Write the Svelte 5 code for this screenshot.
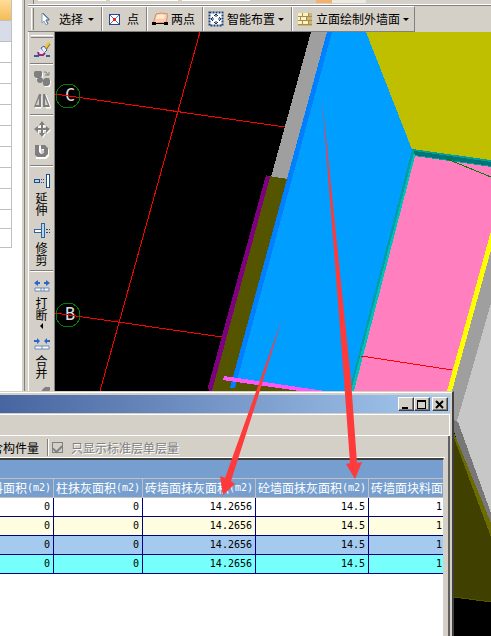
<script>
  const tools = [
    { icon: 'select', label: '选择', menu: true },
    { icon: 'point', label: '点' },
    { icon: 'line', label: '两点' },
    { icon: 'smart', label: '智能布置', menu: true },
    { icon: 'wall', label: '立面绘制外墙面', menu: true }
  ];

  const propertyRows = Array.from({ length: 8 });

  const columns = [
    { name: '料面积', unit: '(m2)', key: 'block' },
    { name: '柱抹灰面积', unit: '(m2)', key: 'column' },
    { name: '砖墙面抹灰面积', unit: '(m2)', key: 'brick' },
    { name: '砼墙面抹灰面积', unit: '(m2)', key: 'concrete' },
    { name: '砖墙面块料面', unit: '', key: 'tile' }
  ];

  const quantities = { block: '0', column: '0', brick: '14.2656', concrete: '14.5', tile: '1' };
  const rows = [
    { tone: 'plain', ...quantities },
    { tone: 'cream', ...quantities },
    { tone: 'blue', ...quantities },
    { tone: 'cyan', ...quantities }
  ];

  let singleLayer = true;
</script>

<div class="app">
  <aside class="properties">
    <div class="prop-head"></div>
    <div class="prop-title"></div>
    {#each propertyRows as _}
      <div class="prop-row"></div>
    {/each}
    <div class="prop-row short"></div>
    <div class="prop-row short"></div>
  </aside>

  <main class="main">
    <div class="top-strip">
      <span class="strip-grip"></span>
      <span class="strip-box"></span>
      <span class="strip-box"></span>
      <span class="strip-box"></span>
      <span class="strip-active"></span>
    </div>

    <div class="toolbar">
      <span class="grip"></span>
      {#each tools as tool}
        <button class="tool {tool.icon}">
          <svg width="16" height="16" viewBox="0 0 16 16" aria-hidden="true">
            {#if tool.icon === 'select'}
              <path d="M4 2v10l2-2 2 4 2-1-2-4h3z" fill="#fff" stroke="#7f9cc0" />
              <path d="M5 2l6 6v1H8l2 4" fill="none" stroke="#5f7488" />
            {:else if tool.icon === 'point'}
              <rect x="2.500" y="3.500" width="10" height="10" fill="#fff" stroke="#26478c" />
              <path d="M3 4l9 9M12 4l-9 9" stroke="#5574c0" />
              <rect x="6" y="7" width="3" height="3" fill="#f02020" />
            {:else if tool.icon === 'line'}
              <path d="M4 3q5-2 12 0l-2 9q-6-1-13 1z" fill="#fbcba9" stroke="#d58c69" />
              <path d="M5 4q4-1 8 0l-1 4q-4-1-8 0z" fill="#ffe8d6" />
              <path d="M1 12.500h14" stroke="#000" />
              <path d="M0 11h4v3H0zM12 11h4v3h-4z" />
            {:else if tool.icon === 'smart'}
              <rect x="1.500" y="1.500" width="13" height="13" fill="#fff" stroke="#1c4279" stroke-dasharray="2 1" stroke-width="2" />
              <path d="M8 3v3M8 10v3M3 8h3M10 8h3M6 5l2-2 2 2M6 11l2 2 2-2M5 6L3 8l2 2M11 6l2 2-2 2" fill="none" stroke="#15335d" />
            {:else}
              <rect x="1" y="2" width="14" height="13" fill="#a08f5c" />
              <path d="M1 2h4v3H1zM6 2h5v3H6zM1 6h2v3H1zM4 6h5v3H4zM1 10h4v3H1zM6 10h5v3H6z" fill="#fff1b8" />
              <path d="M12 2h3v3h-3zM10 6h5v3h-5zM12 10h3v3h-3zM1 14h14v1H1z" fill="#cdb670" />
            {/if}
          </svg>
          <span>{tool.label}</span>
          {#if tool.menu}<i class="caret"></i>{/if}
        </button>
      {/each}
    </div>

    <div class="workspace">
      <nav class="side-tools">
        <span class="side-grip"></span>
        <button class="side-tool brush" aria-label="格式刷">
          <svg width="18" height="16" viewBox="0 0 18 16">
            <path d="M1 14h5M13 14h4" stroke="#2e6096" stroke-width="2" />
            <path d="M11 5l4-5h2v2l-4 6z" fill="#f0c632" />
            <path d="M13 8l4-6" stroke="#806a28" />
            <path d="M8 6l3-2 3 4-3 3z" fill="#e8f0f8" stroke="#3f5f94" />
            <path d="M5 9l3-2 4 4-2 3H6z" fill="#f4dcf0" />
            <path d="M5 10l1 3h4l2-2" fill="none" stroke="#8b2b86" stroke-width="2" />
          </svg>
        </button>
        <hr />
        <button class="side-tool" aria-label="旋转">
          <svg width="18" height="17" viewBox="0 0 18 17">
            <path d="M3 3h7v6H3zM11 9h6l1 3-1 5h-5l-2-4z" fill="#fff" />
            <path d="M1 2l1-1h6l1 1v4L7 8H3L1 6zM10 10l2-2h4l1 2v4l-2 2h-4l-1-2z" fill="#7f7f7f" />
            <circle cx="7" cy="10" r="3" fill="#7f7f7f" />
            <path d="M11 2h2l2 3M12 5h4V2" fill="none" stroke="#7f7f7f" />
          </svg>
        </button>
        <button class="side-tool second" aria-label="镜像">
          <svg width="18" height="16" viewBox="0 0 18 16">
            <path d="M8 3v12H2M18 15l-5-13v13z" fill="#fff" stroke="#fff" />
            <path d="M8 1v13H1L6 1zM10 1v13h7L12 1z" fill="#7f7f7f" />
            <path d="M6 5v7H3zM12 5v7h3z" fill="#d4d0c8" />
          </svg>
        </button>
        <hr />
        <button class="side-tool" aria-label="移动">
          <svg width="18" height="17" viewBox="0 0 18 17">
            <path d="M10 2l3 4h-2v2h3V6l4 3-4 4v-3h-3v3h2l-3 4-3-4h2v-3H6v3L2 9" fill="#fff" />
            <path d="M9 0l3 4h-2v3h3V5l4 3-4 4V9h-3v3h2l-3 4-3-4h2V9H5v3L1 8l4-3v2h3V4H6z" fill="#7f7f7f" />
          </svg>
        </button>
        <button class="side-tool second" aria-label="捕捉">
          <svg width="18" height="16" viewBox="0 0 18 16">
            <path d="M3 2h5v7h4V6H9V2h4l3 4v6l-3 3H3z" fill="#fff" />
            <path d="M2 1h4v7l2 2 3-1V5H8V1h4l3 3v6l-3 3H4l-2-2z" fill="#7f7f7f" />
          </svg>
        </button>
        <hr />
        <button class="side-tool labelled">
          <svg width="18" height="16" viewBox="0 0 18 16" shape-rendering="crispEdges">
            <path d="M1 7h5v3H1z" fill="#b8d5ef" stroke="#194b8c" />
            <path d="M8 7h1M8 10h1M10 7h1M10 10h1" stroke="#194b8c" />
            <path d="M13 2h3v13h-3z" fill="#fff" stroke="#194b8c" />
          </svg>
          <span>延伸</span>
        </button>
        <button class="side-tool labelled">
          <svg width="18" height="16" viewBox="0 0 18 16" shape-rendering="crispEdges">
            <path d="M1 7h10v3H1z" fill="#fff" stroke="#2e65a0" />
            <path d="M8 1h3v14H8z" fill="#b8d5ef" stroke="#2e65a0" />
            <path d="M13 7h2M16 7h1M13 10h2M16 10h1" stroke="#194b8c" />
          </svg>
          <span>修剪</span>
        </button>
        <hr class="tight" />
        <button class="side-tool labelled">
          <svg width="18" height="14" viewBox="0 0 18 14">
            <path d="M1 4l4-3v2h2v2H5v2zM17 4l-4-3v2h-2v2h2v2z" fill="#2866d0" />
            <path d="M2 9h14v3H2zM8 9v3M11 9v3" fill="#fff" stroke="#6788b5" />
          </svg>
          <span>打断</span>
          <i class="side-caret"></i>
        </button>
        <button class="side-tool labelled">
          <svg width="18" height="14" viewBox="0 0 18 14">
            <path d="M7 4L4 1v2H1v2h3v2zM11 4l3-3v2h3v2h-3v2z" fill="#2866d0" />
            <path d="M2 9h14v3H2zM9 9v3" fill="#fff" stroke="#6788b5" />
          </svg>
          <span>合并</span>
        </button>
        <svg class="next-tool" width="18" height="14" viewBox="0 0 18 14" aria-hidden="true">
          <path d="M9 5l3-3h5v3l-3 5H8z" fill="#7f7f7f" />
        </svg>
      </nav>

      <div class="canvas">
        <svg class="model" viewBox="55 32 436 604" preserveAspectRatio="xMinYMin slice" shape-rendering="crispEdges">
          <!-- outer walls -->
          <path d="M331 32H370L417 153L351 391H234L289 178Z" fill="#009fff" />
          <path d="M366 32H491V164L413 152Z" fill="#bfbf00" />
          <path d="M311 32H328L288 179L271 177Z" fill="#9f9f9f" />
          <path d="M269 176L288 179L232 391H209Z" fill="#555500" />
          <path d="M224 378L299 391H209Z" fill="#555500" />
          <path d="M327 32H332L235 388H230Z" fill="#007fff" />
          <path d="M266 175L270 177L212 391H209L208 387Z" fill="#7f007f" />
          <path d="M224 376L325 391H299L223 380Z" fill="#ff55ff" />
          <!-- slab and inner room -->
          <path d="M415 154L491 165V236L450 391H353Z" fill="#ff7fbf" />
          <path d="M412 149L491 160V167L414 156Z" fill="#009f9f" />
          <path d="M414 151L491 162V166L414 155Z" fill="#007474" />
          <path d="M412 150L415 156L354 391H349Z" fill="#009f9f" />
          <path d="M414 152L415 156L354 391H351Z" fill="#00bfbf" />
          <path d="M491 248V513L450 420V391Z" fill="#9f9f9f" />
          <path d="M491 231V250L452 391H447Z" fill="#ffff00" />
          <path d="M491 303L469 380L457 421L491 514Z" fill="#c7c7c7" />
          <path d="M454 420L458 422L491 513V537L454 432Z" fill="#777777" />
          <path d="M454 433L491 523V602L454 597Z" fill="#6b6b00" />
          <path d="M454 438L491 537V602L454 597Z" fill="#404000" />
          <path d="M454 597L491 602" stroke="#555500" />
          <path d="M447 159L491 177" stroke="#007f00" />
          <!-- axis grid -->
          <text x="65" y="101">C</text>
          <text x="65" y="320">B</text>
          <path d="M200 32L100 391M55 94L285 127M55 313L222 337M361 356L452 370" stroke="#ff0000" />
          <circle cx="68" cy="96" r="12" fill="none" stroke="#008000" />
          <circle cx="68" cy="315" r="12" fill="none" stroke="#008000" />
        </svg>
      </div>
    </div>
  </main>

  <section class="dialog">
    <header class="titlebar">
      <button class="win-btn" aria-label="最小化"><svg width="10" height="9"><path d="M1 7h6v2H1z" /></svg></button>
      <button class="win-btn" aria-label="最大化"><svg width="10" height="9"><path d="M0 0h9v9H0zM1 2v6h7V2z" fill-rule="evenodd" /></svg></button>
      <button class="win-btn close" aria-label="关闭"><svg width="10" height="9"><path d="M1 1l7 7M8 1L1 8" stroke="#000" stroke-width="2" /></svg></button>
    </header>
    <div class="menu-band"></div>
    <div class="dialog-body">
      <div class="options">
        <span class="option-cut">含构件量</span>
        <span class="option-sep"></span>
        <label><input type="checkbox" bind:checked={singleLayer} disabled />只显示标准层单层量</label>
      </div>
      <div class="sheet">
        <div class="sheet-band"></div>
        <table>
          <colgroup>
            <col class="narrow" /><col class="medium" /><col class="wide" /><col class="wide" /><col />
          </colgroup>
          <thead>
            <tr>
              {#each columns as column}
                <th><div>{column.name}<span>{column.unit}</span></div></th>
              {/each}
            </tr>
          </thead>
          <tbody>
            {#each rows as row}
              <tr class={row.tone}>
                {#each columns as column}
                  <td>{row[column.key]}</td>
                {/each}
              </tr>
            {/each}
          </tbody>
        </table>
      </div>
    </div>
  </section>

  <!-- callouts pointing at the two plaster columns -->
  <svg class="callouts" viewBox="0 0 491 636" preserveAspectRatio="xMinYMin slice" aria-hidden="true">
    <path d="M322 98L351 380L357 463L362 462L355 479L346 464L350 463L344 380Z" />
    <path d="M282 319L257 400L231 481L235 484L223 495L220 476L225 478L253 400Z" />
  </svg>
</div>

<style>
  :global(body) {
    margin: 0;
    background: #000;
  }

  .app {
    position: relative;
    display: flex;
    min-height: 100vh;
    overflow: hidden;
    background: #d4d0c8;
    color: #000;
    font-family: "Noto Sans CJK SC", sans-serif;
    font-size: 12px;
    line-height: 16px;
  }

  .app * {
    box-sizing: border-box;
  }

  button {
    padding: 0;
    border: 0;
    background: none;
    color: inherit;
    font: inherit;
  }

  .properties {
    flex: none;
    width: 22px;
    padding-right: 10px;
    background: #fff;
  }

  .prop-head,
  .prop-title,
  .prop-row {
    height: 21px;
    border-right: 1px solid #c0c0c0;
    border-bottom: 1px solid #c0c0c0;
  }

  .prop-head {
    background: linear-gradient(#ffdc98, #f3bd58);
  }

  .prop-title {
    background: #d8dce9;
  }

  .prop-row.short {
    height: 19px;
  }

  .main {
    display: flex;
    flex: 1;
    flex-direction: column;
    min-width: 0;
    margin-left: 2px;
    padding-left: 3px;
    border-left: 1px solid #808080;
  }

  .top-strip {
    display: flex;
    gap: 4px;
    height: 6px;
    padding-left: 3px;
    border-bottom: 1px solid #808080;
    box-shadow: inset 0 -1px #fff;
  }

  .strip-grip {
    width: 3px;
    height: 4px;
    border-right: 1px solid #808080;
  }

  .strip-box {
    width: 68px;
    height: 1px;
    background: #fff;
  }

  .strip-active {
    width: 50px;
    height: 3px;
    margin-left: 62px;
    border-left: 16px solid #f5b06a;
    background: #ece9e2;
  }

  .toolbar {
    display: flex;
    align-self: flex-start;
    height: 26px;
    padding-left: 3px;
    border: solid;
    border-width: 1px 1px 1px 0;
    border-color: #fff #808080 #808080;
    white-space: nowrap;
  }

  .grip {
    width: 3px;
    height: 22px;
    margin: 1px 4px 0 0;
    border-left: 1px solid #fff;
    border-right: 1px solid #808080;
  }

  .tool {
    display: flex;
    align-items: center;
    gap: 3px;
    padding: 0 7px 0 5px;
    border-right: 1px solid #808080;
    box-shadow: inset 1px 0 #fff;
  }

  .tool.select {
    gap: 5px;
    padding-left: 0;
    box-shadow: none;
  }

  .tool.point {
    gap: 4px;
  }

  .tool:last-child {
    padding-right: 5px;
    border: 0;
  }

  .caret {
    border: 3px solid transparent;
    border-top-color: #000;
    border-bottom: 0;
  }

  .workspace {
    display: flex;
    flex: 1;
  }

  .side-tools {
    display: flex;
    flex: none;
    flex-direction: column;
    align-items: center;
    width: 27px;
    border-left: 1px solid #fff;
    border-right: 1px solid #808080;
  }

  .side-grip {
    width: 22px;
    height: 3px;
    margin: 3px 0 4px;
    border-top: 1px solid #fff;
    border-bottom: 1px solid #808080;
  }

  .side-tools hr {
    width: 23px;
    height: 2px;
    margin: 5px 0;
    border: solid;
    border-width: 1px 0;
    border-color: #808080 #fff #fff;
  }

  .side-tools hr.tight {
    margin: 4px 0 7px;
  }

  .side-tool {
    display: flex;
    flex-direction: column;
    align-items: center;
  }

  .side-tool.second,
  .labelled + .labelled,
  .next-tool {
    margin-top: 6px;
  }

  .side-tool span {
    width: 12px;
    margin-top: 4px;
    line-height: 12px;
    word-break: break-all;
  }

  .side-caret {
    margin: 2px 0;
    border: 3px solid transparent;
    border-right-color: #000;
    border-left: 0;
  }

  .canvas {
    position: relative;
    flex: 1;
    background: #000;
  }

  .model {
    position: absolute;
    inset: 0;
    width: 100%;
    height: 100%;
  }

  .model text {
    fill: #dcdcdc;
    font-family: "DejaVu Sans Mono", monospace;
    font-size: 17px;
  }

  .dialog {
    position: absolute;
    inset: 391px 37px 0 0;
    display: flex;
    flex-direction: column;
    padding: 3px 2px 0 0;
    border-top: 1px solid #d4d0c8;
    border-right: 2px solid #404040;
    background: #d4d0c8;
    box-shadow: inset 0 1px #fff;
  }

  .titlebar {
    display: flex;
    justify-content: flex-end;
    align-items: center;
    height: 18px;
    padding-right: 2px;
    background: linear-gradient(90deg, #4765a0, #a6caf0);
  }

  .win-btn {
    display: grid;
    place-items: center;
    width: 16px;
    height: 14px;
    border: 1px solid;
    border-color: #fff #404040 #404040 #fff;
    background: #d4d0c8;
    box-shadow: inset -1px -1px #808080;
  }

  .win-btn.close {
    margin-left: 2px;
  }

  .menu-band {
    height: 22px;
    margin-top: 1px;
    border-top: 1px solid #fff;
    border-right: 1px solid #fff;
    border-bottom: 1px solid #fff;
  }

  .dialog-body {
    display: flex;
    flex: 1;
    flex-direction: column;
    padding-right: 3px;
    border-right: 2px solid #606060;
  }

  .options {
    display: flex;
    align-items: center;
    height: 22px;
    padding-top: 2px;
    border-bottom: 1px solid #fff;
    overflow: hidden;
    white-space: nowrap;
  }

  .option-cut {
    margin-left: -9px;
  }

  .option-sep {
    width: 2px;
    height: 17px;
    margin: 0 3px 0 8px;
    border-left: 1px solid #808080;
    border-right: 1px solid #fff;
  }

  .options label {
    display: flex;
    align-items: center;
    gap: 8px;
    color: #808080;
    text-shadow: 1px 1px #fff;
  }

  .options input {
    display: grid;
    place-items: center;
    width: 11px;
    height: 11px;
    margin: 0;
    border: 1px solid #808080;
    appearance: none;
  }

  .options input:checked::before {
    width: 7px;
    height: 4px;
    border: solid #808080;
    border-width: 0 0 2px 2px;
    content: "";
    transform: rotate(-45deg);
  }

  .sheet {
    flex: 1;
    margin-right: 1px;
    border-top: 2px solid #404040;
    border-right: 1px solid #d4d0c8;
    background: #fff;
    overflow: hidden;
  }

  .sheet-band {
    height: 18px;
    background: #769fcf;
  }

  table {
    width: 100%;
    border-spacing: 0;
    table-layout: fixed;
  }

  .narrow {
    width: 54px;
  }

  .medium {
    width: 89px;
  }

  .wide {
    width: 113px;
  }

  th {
    height: 20px;
    padding: 0 2px;
    border: solid #c0c0c0;
    border-width: 1px 1px 1px 0;
    background: #769fcf;
    color: #fff;
    font-weight: 400;
    overflow: hidden;
  }

  th div {
    display: flex;
    justify-content: flex-end;
    white-space: nowrap;
  }

  th:last-child div {
    justify-content: flex-start;
  }

  th span,
  td {
    font-family: "DejaVu Sans Mono", monospace;
    font-size: 10px;
  }

  td {
    height: 19px;
    padding: 0 3px;
    border-right: 1px solid #000080;
    border-bottom: 1px solid #000080;
    text-align: right;
  }

  th:last-child,
  td:last-child {
    border-right: 0;
  }

  td:last-child {
    padding-right: 1px;
  }

  .cream {
    background: #fffddf;
  }

  .blue {
    background: #a4caf0;
  }

  .cyan {
    background: #77fffb;
  }

  .callouts {
    position: absolute;
    inset: 0;
    width: 100%;
    height: 100%;
    fill: #ff3a3a;
    pointer-events: none;
  }
</style>
